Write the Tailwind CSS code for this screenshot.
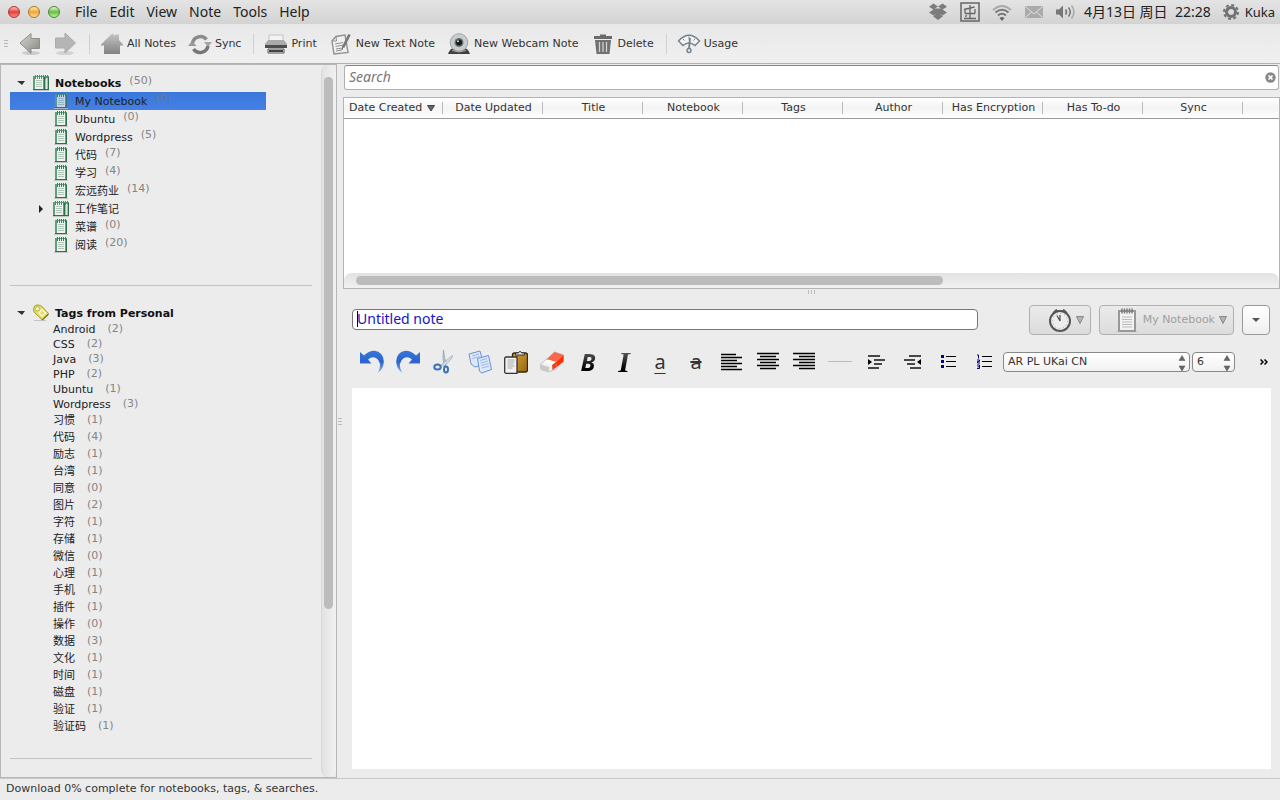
<!DOCTYPE html>
<html lang="en">
<head>
  <meta charset="UTF-8" />
  <meta name="viewport" content="width=device-width, initial-scale=1" />
  <title>Notes</title>
  <script src="https://cdn.jsdelivr.net/npm/@tailwindcss/browser@4"></script>
</head>
<body class="relative h-screen flex flex-col overflow-hidden bg-[#ececec] text-[#222] text-[11px] leading-4 font-['DejaVu_Sans','Noto_Sans_CJK_SC',sans-serif]">

  <!-- Shared shapes -->
  <svg class="absolute size-0">
    <defs>
      <linearGradient id="gray-down" x1="0" y1="0" x2="0" y2="1">
        <stop offset="0" stop-color="#c4c4c4" /><stop offset="1" stop-color="#828282" />
      </linearGradient>
      <linearGradient id="arrow-left" x1="0" y1="0" x2="1" y2="1">
        <stop offset="0" stop-color="#d6d8d4" /><stop offset="1" stop-color="#83857f" />
      </linearGradient>
      <linearGradient id="blue-arrow" x1="0" y1="0" x2="0" y2="1">
        <stop offset="0" stop-color="#3577d8" /><stop offset=".5" stop-color="#2c63cc" /><stop offset="1" stop-color="#8ab4ea" />
      </linearGradient>
      <linearGradient id="paste" x1="0" y1="0" x2="1" y2="1">
        <stop offset="0" stop-color="#d9a437" /><stop offset="1" stop-color="#94650c" />
      </linearGradient>
      <symbol id="notebook" viewBox="0 0 16 18">
        <path d="M1 16.500h14" stroke="#c4c4c4" />
        <rect x="2" y="2" width="12" height="14" fill="#5f9f7b" />
        <path d="M13.500 3v13M2 15.500h12" stroke="#2e7049" />
        <rect x="4" y="3" width="8" height="12" fill="#edf3ef" />
        <path d="M5 6.500h6M5 8.500h6M5 10.500h6M5 12.500h6" stroke="#b0c4b8" />
        <path d="M4.500 1v4M6.500 1v4M8.500 1v4M10.500 1v4M12.500 1v3" stroke="#666" />
      </symbol>
      <symbol id="notebooks" viewBox="0 0 16 18">
        <path d="M0 16.500h16" stroke="#c4c4c4" />
        <rect x="0" y="2" width="16" height="14" fill="#5f9f7b" />
        <path d="M15.500 3v13M0 15.500h16M11.500 3v13" stroke="#2e7049" />
        <rect x="2" y="3" width="8" height="12" fill="#edf3ef" />
        <path d="M13.500 4v11" stroke="#dbe9e1" stroke-width="2" />
        <path d="M3 6.500h6M3 8.500h6M3 10.500h6M3 12.500h6" stroke="#b0c4b8" />
        <path d="M2.500 1v4M4.500 1v4M6.500 1v4M8.500 1v4M10.500 1v4M12.500 1v4M14.500 1v3" stroke="#777" />
      </symbol>
    </defs>
  </svg>

  <!-- Menu bar -->
  <header class="h-6 shrink-0 flex items-center pl-2 pr-[5px] bg-linear-to-b from-[#e4e4e4] to-[#d3d3d3] text-sm font-['Noto_Sans','Noto_Sans_CJK_SC',sans-serif]">
    <div class="flex gap-2">
      <button aria-label="Close" class="size-3 rounded-full border border-[#a33] bg-linear-to-b from-[#fbb] via-[#e33f3f] to-[#f88]"></button>
      <button aria-label="Minimize" class="size-3 rounded-full border border-[#a87420] bg-linear-to-b from-[#fea] via-[#eda637] to-[#fd8]"></button>
      <button aria-label="Maximize" class="size-3 rounded-full border border-[#4b8332] bg-linear-to-b from-[#dfc] via-[#6fb94c] to-[#af8]"></button>
    </div>
    <nav class="flex gap-3 ml-[15px]">
      <button>File</button>
      <button>Edit</button>
      <button>View</button>
      <button>Note</button>
      <button>Tools</button>
      <button>Help</button>
    </nav>
    <div class="ml-auto flex items-center">
      <svg class="w-5 h-5 mr-3" viewBox="0 0 20 20" fill="#7c7c7c"><path d="M5.500 1.500L10 4.500 5.500 7.500 1 4.800zM14.500 1.500L19 4.800 14.500 7.500 10 4.500zM1 10.500L5.500 7.500 10 10.500 5.500 13.500zM19 10.500L14.500 7.500 10 10.500l4.500 3zM5 14.200L10 11l5 3.200-5 3.800z" /><path d="M5 6.500h10v6H5z" /></svg>
      <svg class="w-5 h-5 mr-3" viewBox="0 0 20 20" fill="none" stroke="#666" stroke-width="1.500"><rect x="1" y="1" width="18" height="18" /><path d="M4 16.500h12M10 3v13.500M5 11.500h10M5 7v4.500M15 7v4.500M14.500 5L4 7.500M6.500 13l-1 2" stroke-width="1.300" /></svg>
      <svg class="w-5 h-5 mr-3" viewBox="0 0 20 20" fill="none" stroke-width="2"><path d="M1 8q9-8 18 0" stroke="#aaa" /><path d="M3.500 10.500q6.500-5.500 13 0" stroke="#777" /><path d="M6 13.500q4-3.500 8 0" stroke="#777" /><path d="M10 19l-2.500-3q2.500-2 5 0z" fill="#666" stroke="none" /></svg>
      <svg class="w-5 h-5 mr-3" viewBox="0 0 20 20"><rect x="1" y="4" width="18" height="12" fill="#aaa" /><path d="M1.500 4.500L10 12l8.500-7.500M1.500 15.500L7.500 10M18.500 15.500L12.500 10" fill="none" stroke="#e2e2e2" /></svg>
      <svg class="w-5 h-5 mr-2" viewBox="0 0 20 20" fill="none" stroke="#777" stroke-width="1.600"><path d="M0 7.500h3l4-4v13l-4-4H0z" fill="#777" stroke="none" /><path d="M9.500 7.500q2 2.500 0 5M12.500 5.500q3.500 4.500 0 9" /><path d="M15.500 3.500q5 6.500 0 13" stroke="#aaa" /></svg>
      <span class="whitespace-pre">4月13日 周日  22:28</span>
      <svg class="w-4 h-4 ml-3 mr-1.5" viewBox="0 0 16 16" fill="none" stroke="#717171"><circle cx="8" cy="8" r="4.500" stroke-width="3" /><circle cx="8" cy="8" r="7" stroke-width="2" stroke-dasharray="3 2.500" /></svg>
      <span class="text-[13px]">Kuka</span>
    </div>
  </header>

  <!-- Toolbar -->
  <div class="h-10 shrink-0 flex items-center pl-1 border-b border-[#b2b2b2] bg-linear-to-b from-[#e8e8e8] to-[#f0f0f0] leading-[18px] text-[#333]">
    <span class="flex flex-col gap-0.5 w-1 mr-[11px]"><i class="h-px bg-[#b8b8b8]"></i><i class="h-px bg-[#b8b8b8]"></i><i class="h-px bg-[#b8b8b8]"></i></span>
    <button aria-label="Back" class="mr-2.5"><svg class="size-6" viewBox="0 0 24 24"><ellipse cx="12" cy="21" rx="9" ry="2" fill="#ccc" /><path d="M1 11L12 1.500v5h8.500v10H12v5z" fill="url(#arrow-left)" stroke="#8c8e89" /></svg></button>
    <button aria-label="Forward" class="mr-1.5"><svg class="size-6" viewBox="0 0 24 24"><ellipse cx="12" cy="21" rx="9" ry="2" fill="#d2d2d2" /><path d="M22.500 11L12 1v5H2.500v10H12v5z" fill="#b5b5b5" stroke="#aaa" /></svg></button>
    <span class="w-px h-5 ml-1.5 mr-1 bg-[#d0d0d0]"></span>
    <button class="flex items-center gap-[3px] px-1.5"><svg class="size-6" viewBox="0 0 24 24" fill="url(#gray-down)"><path d="M1 12.500L10 3.500 12.500 1.500 15 4V2.500h4V8l4 4.500v1H20V22H4v-8.500H1z" /></svg>All Notes</button>
    <button class="flex items-center gap-[3px] px-1.5"><svg class="size-6" viewBox="0 0 24 24" fill="none" stroke-width="3.500"><path d="M4.500 11a8 8 0 0 1 14-3.500" stroke="#8b8b8b" /><path d="M16 10h8l-4 5z" fill="#a5a5a5" /><path d="M20 14a8 8 0 0 1-14.500 3" stroke="#777" /><path d="M0 14h8.500L4 9z" fill="#999" /></svg>Sync</button>
    <span class="w-px h-5 ml-1.5 mr-1 bg-[#d0d0d0]"></span>
    <button class="flex items-center gap-[3px] px-1.5"><svg class="size-6" viewBox="0 0 24 24"><path d="M5 3h14v8H5z" fill="#f3f3f3" stroke="#c4c4c4" /><path d="M4 8h16l3 4v2H1v-2z" fill="#aaa" /><path d="M1 13h22v3H1z" fill="#4d4d4d" /><path d="M4 17h16v4H4z" fill="#eee" stroke="#555" /><path d="M5 19h14" stroke="#444" stroke-width="2" /></svg>Print</button>
    <button class="flex items-center gap-[3px] px-1.5"><svg class="size-6" viewBox="0 0 24 24" fill="none" stroke="#909090"><path d="M3 9l4-4.500 9-1.500 3 17.500L5 22z" fill="#f1f1f1" stroke-width="1.400" /><path d="M3 9h4.500L7 4.500" /><path d="M6 12l8-1.500M6.500 14.500l8-1.500M7 17l7-1M7 19l6-1" /><path d="M20.500 2.500l-6.500 13" stroke="#777" stroke-width="2.600" /><path d="M14 15l-1 3" stroke="#777" /></svg>New Text Note</button>
    <button class="flex items-center gap-[3px] px-1.5"><svg class="size-6" viewBox="0 0 24 24"><path d="M1 22q2-6 6-6h10q4 0 6 6z" fill="#404040" /><circle cx="12" cy="10.500" r="8.800" fill="#c9ccce" stroke="#a0a3a5" /><circle cx="12" cy="10.500" r="4.500" fill="#687070" /><circle cx="12" cy="10.500" r="3" fill="#161c1c" /><circle cx="11" cy="9.300" r="1" fill="#ddd" /><path d="M5 18.500q7 3 14 0" stroke="#aaa" fill="none" /></svg>New Webcam Note</button>
    <button class="flex items-center gap-[3px] px-1.5"><svg class="size-6" viewBox="0 0 24 24"><path d="M3 4h6V2.500h6V4h6v3H3z" fill="#6b6b6b" /><path d="M4 8h16l-1.500 14h-13z" fill="#707070" /><path d="M8.500 10v10M12 10v10M15.500 10v10" stroke="#d2d2d2" stroke-width="1.300" /></svg>Delete</button>
    <span class="w-px h-5 ml-1.5 mr-1 bg-[#d0d0d0]"></span>
    <button class="flex items-center gap-[3px] px-1.5"><svg class="size-6" viewBox="0 0 24 24" fill="none" stroke="#74808a" stroke-width="1.400"><path d="M1.500 9Q12-2.500 22.500 9l-4.500 4.500Q12 8.500 6 13.500z" fill="#f4f4f4" /><path d="M6 7l1.500 1.500M12 4.500v3M18 7l-1.500 1.500" stroke-width="1" /><path d="M13 6l-1 11" stroke-width="1.800" /><circle cx="12" cy="18.500" r="2" /></svg>Usage</button>
  </div>

  <main class="flex flex-1 min-h-0">
    <!-- Notebook and tag tree -->
    <aside class="w-[337px] shrink-0 flex border border-[#b6b6b6]">
      <div class="flex-1 pl-[9px] pr-[9px]">
        <section class="pt-[9px] pb-[31px] border-b border-[#c2c2c2]">
          <div class="flex h-[18px] leading-5">
            <button aria-label="Collapse notebooks" class="w-[23px] pl-[7px]"><svg class="w-2 h-1" viewBox="0 0 8 4"><path d="M0 0h8L5 4z" fill="#333" /></svg></button>
            <svg class="w-4 h-[18px] mr-1.5"><use href="#notebooks" /></svg>
            <h2 class="font-bold text-[#111]">Notebooks</h2><span class="ml-2 leading-[14px] text-[#858585]">(50)</span>
          </div>
          <ul class="leading-5">
            <li class="flex h-[18px] w-64 pl-[43px] bg-linear-to-b from-[#3b76da] to-[#4480e4]"><svg class="w-4 h-[18px] mr-1.5 opacity-75"><use href="#notebook" /></svg>My Notebook<span class="ml-2 leading-[14px] text-[#66789c]">(0)</span></li>
            <li class="flex h-[18px] pl-[43px]"><svg class="w-4 h-[18px] mr-1.5"><use href="#notebook" /></svg>Ubuntu<span class="ml-2 leading-[14px] text-[#858585]">(0)</span></li>
            <li class="flex h-[18px] pl-[43px]"><svg class="w-4 h-[18px] mr-1.5"><use href="#notebook" /></svg>Wordpress<span class="ml-2 leading-[14px] text-[#858585]">(5)</span></li>
            <li class="flex h-[18px] pl-[43px]"><svg class="w-4 h-[18px] mr-1.5"><use href="#notebook" /></svg>代码<span class="ml-2 leading-[14px] text-[#858585]">(7)</span></li>
            <li class="flex h-[18px] pl-[43px]"><svg class="w-4 h-[18px] mr-1.5"><use href="#notebook" /></svg>学习<span class="ml-2 leading-[14px] text-[#858585]">(4)</span></li>
            <li class="flex h-[18px] pl-[43px]"><svg class="w-4 h-[18px] mr-1.5"><use href="#notebook" /></svg>宏远药业<span class="ml-2 leading-[14px] text-[#858585]">(14)</span></li>
            <li class="flex h-[18px]"><button aria-label="Expand 工作笔记" class="w-[43px] pl-[29px]"><svg class="w-1 h-2" viewBox="0 0 4 8"><path d="M0 0v8l4-4z" fill="#222" /></svg></button><svg class="w-4 h-[18px] mr-1.5"><use href="#notebooks" /></svg>工作笔记</li>
            <li class="flex h-[18px] pl-[43px]"><svg class="w-4 h-[18px] mr-1.5"><use href="#notebook" /></svg>菜谱<span class="ml-2 leading-[14px] text-[#858585]">(0)</span></li>
            <li class="flex h-[18px] pl-[43px]"><svg class="w-4 h-[18px] mr-1.5"><use href="#notebook" /></svg>阅读<span class="ml-2 leading-[14px] text-[#858585]">(20)</span></li>
          </ul>
        </section>

        <section class="pt-[18px] pb-6 border-b border-[#c2c2c2]">
          <div class="flex h-[17px] leading-5">
            <button aria-label="Collapse tags" class="w-[23px] pl-[7px]"><svg class="w-2 h-1" viewBox="0 0 8 4"><path d="M0 0h8L5 4z" fill="#333" /></svg></button>
            <svg class="w-4 h-[17px] mr-1.5" viewBox="0 0 16 17"><path d="M1 16.500h12" stroke="#c4c4c4" /><path d="M.5 4.500Q1 1 4.500.8L8.500 2 15.500 9.500 9 15.800 1 8z" fill="#e2dc6a" stroke="#a89f2c" /><path d="M9 15.800l6.500-6.300v1.500L9.500 16.500z" fill="#6d6412" /><circle cx="4.500" cy="4.800" r="2" fill="#fbfbe0" stroke="#a89f2c" stroke-width=".7" /><path d="M6 9l3-3.500 3.500 3.500-3.500 3z" fill="none" stroke="#fbf9cf" stroke-width="1.300" /></svg>
            <h2 class="font-bold text-[#111]">Tags from Personal</h2>
          </div>
          <ul class="pl-[43px] leading-[17px]">
            <li class="flex h-[15px]">Android<span class="ml-3 leading-[15px] text-[#858585]">(2)</span></li>
            <li class="flex h-[15px]">CSS<span class="ml-3 leading-[15px] text-[#858585]">(2)</span></li>
            <li class="flex h-[15px]">Java<span class="ml-3 leading-[15px] text-[#858585]">(3)</span></li>
            <li class="flex h-[15px]">PHP<span class="ml-3 leading-[15px] text-[#858585]">(2)</span></li>
            <li class="flex h-[15px]">Ubuntu<span class="ml-3 leading-[15px] text-[#858585]">(1)</span></li>
            <li class="flex h-[15px]">Wordpress<span class="ml-3 leading-[15px] text-[#858585]">(3)</span></li>
          </ul>
          <ul class="pl-[43px] leading-5">
            <li class="flex h-[17px]">习惯<span class="ml-3 leading-[17px] text-[#858585]">(1)</span></li>
            <li class="flex h-[17px]">代码<span class="ml-3 leading-[17px] text-[#858585]">(4)</span></li>
            <li class="flex h-[17px]">励志<span class="ml-3 leading-[17px] text-[#858585]">(1)</span></li>
            <li class="flex h-[17px]">台湾<span class="ml-3 leading-[17px] text-[#858585]">(1)</span></li>
            <li class="flex h-[17px]">同意<span class="ml-3 leading-[17px] text-[#858585]">(0)</span></li>
            <li class="flex h-[17px]">图片<span class="ml-3 leading-[17px] text-[#858585]">(2)</span></li>
            <li class="flex h-[17px]">字符<span class="ml-3 leading-[17px] text-[#858585]">(1)</span></li>
            <li class="flex h-[17px]">存储<span class="ml-3 leading-[17px] text-[#858585]">(1)</span></li>
            <li class="flex h-[17px]">微信<span class="ml-3 leading-[17px] text-[#858585]">(0)</span></li>
            <li class="flex h-[17px]">心理<span class="ml-3 leading-[17px] text-[#858585]">(1)</span></li>
            <li class="flex h-[17px]">手机<span class="ml-3 leading-[17px] text-[#858585]">(1)</span></li>
            <li class="flex h-[17px]">插件<span class="ml-3 leading-[17px] text-[#858585]">(1)</span></li>
            <li class="flex h-[17px]">操作<span class="ml-3 leading-[17px] text-[#858585]">(0)</span></li>
            <li class="flex h-[17px]">数据<span class="ml-3 leading-[17px] text-[#858585]">(3)</span></li>
            <li class="flex h-[17px]">文化<span class="ml-3 leading-[17px] text-[#858585]">(1)</span></li>
            <li class="flex h-[17px]">时间<span class="ml-3 leading-[17px] text-[#858585]">(1)</span></li>
            <li class="flex h-[17px]">磁盘<span class="ml-3 leading-[17px] text-[#858585]">(1)</span></li>
            <li class="flex h-[17px]">验证<span class="ml-3 leading-[17px] text-[#858585]">(1)</span></li>
            <li class="flex h-[17px]">验证码<span class="ml-3 leading-[17px] text-[#858585]">(1)</span></li>
          </ul>
        </section>
      </div>
      <!-- Scrollbar -->
      <div class="w-[15px] pt-3 pl-0.5 rounded-lg border-l border-[#d8d8d8] bg-linear-to-r from-[#e2e2e2] to-[#f2f2f2]">
        <div class="w-[9px] h-[76%] rounded-full bg-[#bcbcbc]"></div>
      </div>
    </aside>

    <!-- Splitter -->
    <div class="w-1.5 shrink-0 flex flex-col justify-center items-center gap-0.5"><i class="w-1 h-px bg-[#bbb]"></i><i class="w-1 h-px bg-[#bbb]"></i><i class="w-1 h-px bg-[#bbb]"></i></div>

    <div class="flex-1 min-w-0 flex flex-col">
      <div class="relative ml-px mt-px mr-px">
        <input type="search" aria-label="Search" placeholder="Search" class="block w-full h-[25px] px-1 pb-0.5 rounded-[3px] border border-[#b0b0b0] border-t-[#888] bg-white text-sm italic placeholder:text-[#777] font-['Noto_Sans',sans-serif]" />
        <button aria-label="Clear search" class="absolute right-[3px] top-[7px]"><svg class="size-[11px]" viewBox="0 0 11 11"><circle cx="5.500" cy="5.500" r="5.200" fill="#888" /><path d="M3.500 3.500l4 4M7.500 3.500l-4 4" stroke="#fff" stroke-width="1.700" /></svg></button>
      </div>

      <!-- Note list -->
      <div class="h-48 shrink-0 mt-[7px] flex flex-col border border-[#b4b4b4] bg-white">
        <div class="flex-1 overflow-hidden">
          <table class="w-[1050px] table-fixed text-[#333]">
            <thead>
              <tr class="h-5 border-b border-[#999] bg-linear-to-b from-white via-[#f4f4f4] to-[#fdfdfd]">
                <th class="w-[99px] p-0 font-normal"><span class="flex items-center justify-between pl-[5px] pr-[7px] border-r border-[#bbb] leading-3">Date Created<svg class="w-2 h-1.5" viewBox="0 0 8 6"><path d="M.5.5h7L4 6z" fill="#666" stroke="#444" /></svg></span></th>
                <th class="w-[100px] p-0 font-normal"><span class="block pl-0.5 border-r border-[#bbb] leading-3">Date Updated</span></th>
                <th class="w-[100px] p-0 font-normal"><span class="block pl-0.5 border-r border-[#bbb] leading-3">Title</span></th>
                <th class="w-[100px] p-0 font-normal"><span class="block pl-0.5 border-r border-[#bbb] leading-3">Notebook</span></th>
                <th class="w-[100px] p-0 font-normal"><span class="block pl-0.5 border-r border-[#bbb] leading-3">Tags</span></th>
                <th class="w-[100px] p-0 font-normal"><span class="block pl-0.5 border-r border-[#bbb] leading-3">Author</span></th>
                <th class="w-[100px] p-0 font-normal"><span class="block pl-0.5 border-r border-[#bbb] leading-3">Has Encryption</span></th>
                <th class="w-[100px] p-0 font-normal"><span class="block pl-0.5 border-r border-[#bbb] leading-3">Has To-do</span></th>
                <th class="w-[100px] p-0 font-normal"><span class="block pl-0.5 border-r border-[#bbb] leading-3">Sync</span></th>
                <th class="p-0"></th>
              </tr>
            </thead>
          </table>
        </div>
        <div class="h-[15px] pt-[3px] pl-3 rounded-t-lg bg-linear-to-b from-[#e2e2e2] to-[#f1f1f1]">
          <div class="w-7/11 h-[9px] rounded-full bg-[#bcbcbc]"></div>
        </div>
      </div>
      <div class="h-1.5 flex justify-center items-center gap-0.5"><i class="w-px h-1 bg-[#bbb]"></i><i class="w-px h-1 bg-[#bbb]"></i><i class="w-px h-1 bg-[#bbb]"></i></div>

      <!-- Editor -->
      <div class="flex-1 min-h-0 flex flex-col pl-[9px] pr-[9px] pb-[9px]">
        <div class="flex items-start gap-2 mt-2.5 mr-px">
          <div class="relative w-[626px] mt-1">
            <input type="text" aria-label="Note title" value="Untitled note" class="block w-full h-[21px] px-1 pb-0.5 rounded border border-[#777] bg-white text-sm leading-4 text-[#1414c8] font-['Noto_Sans',sans-serif]" />
            <span class="absolute left-[5px] top-0.5 w-px h-4 bg-black"></span>
          </div>
          <button aria-label="Reminder" class="ml-auto w-[62px] h-[30px] flex items-center justify-end gap-1 pr-1.5 rounded border border-[#b0b0b0] bg-linear-to-b from-[#ebebeb] to-[#dcdcdc]">
            <svg class="size-6" viewBox="0 0 24 24" fill="none" stroke="#555"><path d="M5 4.500l3-3 2 1.500h4l2-1.500 3 3z" fill="#555" /><circle cx="12" cy="13" r="10" fill="#ededed" stroke-width="2" /><path d="M12 13V7M12 13l-3-5.500" stroke-width="1.300" /><circle cx="12" cy="13" r="7.500" stroke="#999" stroke-dasharray="1 2.930" /></svg>
            <svg class="w-2 h-2" viewBox="0 0 8 8"><path d="M.5.5h7L4 7.500z" fill="#b4b4b4" stroke="#888" /></svg>
          </button>
          <button class="w-[135px] h-[30px] flex items-center justify-end gap-1 pr-1.5 rounded border border-[#b0b0b0] bg-linear-to-b from-[#ebebeb] to-[#dcdcdc] text-[#a0a0a0]">
            <svg class="size-6" viewBox="0 0 24 24"><path d="M1 23.500h22" stroke="#ccc" /><rect x="4" y="3" width="16" height="20" fill="#f2f2f2" stroke="#999" stroke-width="2" /><path d="M7 9h10M7 11.500h10M7 14h10M7 16.500h10M7 19h10" stroke="#bbb" /><path d="M7 .5v5M9.500.5v5M12 .5v5M14.500.5v5M17 .5v5" stroke="#777" stroke-width="1.400" /></svg>
            <span class="whitespace-nowrap">My Notebook</span>
            <svg class="w-2 h-2" viewBox="0 0 8 8"><path d="M.5.5h7L4 7.500z" fill="#b4b4b4" stroke="#888" /></svg>
          </button>
          <button aria-label="More" class="w-7 h-[30px] flex items-center justify-center rounded border border-[#999] bg-linear-to-b from-white to-[#f0f0f0]"><svg class="w-2 h-1" viewBox="0 0 8 4"><path d="M0 0h8L4 4z" fill="#555" /></svg></button>
        </div>

        <div class="flex items-center h-6 mt-[15px] mb-3.5 pl-2 pr-px">
          <div class="flex gap-3 mr-[7px]">
            <button aria-label="Undo"><svg class="size-6" viewBox="0 0 24 24"><path d="M0 2v11.500h11.500L8 9.500q4-3.500 8-1.500 7 4 2 15 6-5 5.800-12Q23 2 14.500 .8 8.500 .8 4 5.500z" fill="url(#blue-arrow)" /></svg></button>
            <button aria-label="Redo"><svg class="size-6" viewBox="0 0 24 24"><path d="M24 2v11.500H12.500L16 9.500q-4-3.500-8-1.500-7 4-2 15Q0 18 .2 11 1 2 9.500 .8q6 0 10.500 4.700z" fill="url(#blue-arrow)" /></svg></button>
            <button aria-label="Cut"><svg class="size-6" viewBox="0 0 24 24" fill="none"><path d="M11.500 0L14 15.500l-2-1q-2-7-.5-14.500z" fill="#b9c6cf" stroke="#8799a5" stroke-width=".6" /><path d="M20.500 5.500q0 4-9.500 11l-1.500-2z" fill="#d5dde2" stroke="#8799a5" stroke-width=".6" /><ellipse cx="5.500" cy="17" rx="3.200" ry="2.600" stroke="#3872b8" stroke-width="2" /><ellipse cx="14" cy="19.500" rx="2" ry="3" stroke="#3872b8" stroke-width="2" /></svg></button>
            <button aria-label="Copy"><svg class="size-6" viewBox="0 0 24 24" fill="#dce8fb" stroke="#6b8fd8"><path d="M1 4l11-3 3.500 13.500L7 17 3 14z" /><path d="M4 6l7-2M4.500 8.500l7-2" stroke="#9db7e8" /><path d="M9.500 8.500l11-3 3 14-10 3.500-2-2z" /><path d="M12 10.500l7-2M12.500 13l7.500-2M13 15.500l7.500-2M14 18l7-2" stroke="#9db7e8" /></svg></button>
            <button aria-label="Paste"><svg class="size-6" viewBox="0 0 24 24"><rect x="8.500" y="3" width="15" height="19" rx="2" fill="url(#paste)" stroke="#33270a" stroke-width="1.300" /><path d="M11.500 5V3h3q1.500-3.500 3 0h3v2z" fill="#eee" stroke="#333" /><path d="M.7 8.500q0-1.500 1.500-1.500H13v16.300H2.200Q.7 23.300.7 21.500z" fill="#f1f1f1" stroke="#333" stroke-width="1.300" /><path d="M3.500 10h7M3.500 12h7M3.500 14h6M3.500 16h7M3.500 18h5" stroke="#aaa" /></svg></button>
            <button aria-label="Remove formatting"><svg class="size-6" viewBox="0 0 24 24"><path d="M3 21h12l8-8z" fill="#d8d8d8" /><path d="M.5 14.500L14.500 2 23.500 5v6.500L9.500 22 1 19.500z" fill="#f3f3f3" stroke="#aaa" stroke-width=".7" /><path d="M6.500 9.500L14.500 2l9 3-7.500 7z" fill="#f46a4a" /><path d="M16 12l7.500-7v6.500l-7 5.500z" fill="#ff2d05" /><path d="M8 9.500l8 2.500-4 3-8.500-3z" fill="#fafafa" /><path d="M12 15l4-3 .5 5-4 3z" fill="#f0401c" /><path d="M1 14.500l8.500 2.500-.5 5-8-2.500z" fill="#c9c9c9" /></svg></button>
            <button aria-label="Bold" class="size-6 font-[Noto_Sans,sans-serif] text-2xl/6 font-bold italic bg-linear-to-b from-[#666] to-black bg-clip-text text-transparent">B</button>
            <button aria-label="Italic" class="size-6 font-['Liberation_Serif',serif] text-3xl/6 font-bold italic bg-linear-to-b from-[#666] to-black bg-clip-text text-transparent">I</button>
            <button aria-label="Underline" class="size-6 font-['Noto_Sans',sans-serif] text-xl/5 underline underline-offset-4 decoration-1 text-[#333]">a</button>
            <button aria-label="Strikethrough" class="size-6 font-['Noto_Sans',sans-serif] text-xl/6 line-through text-[#333]">a</button>
            <button aria-label="Align left"><svg class="size-6" viewBox="0 0 24 24" stroke="#000" stroke-width="1.500"><path d="M1 4.500h15M1 7.500h21M1 10.500h16M1 13.500h21M1 16.500h16M1 19.500h21" /></svg></button>
            <button aria-label="Align center"><svg class="size-6" viewBox="0 0 24 24" stroke="#000" stroke-width="1.500"><path d="M1 3.500h22M4 6.500h16M1 9.500h22M4 12.500h16M1 15.500h22M4 18.500h16" /></svg></button>
            <button aria-label="Align right"><svg class="size-6" viewBox="0 0 24 24" stroke="#000" stroke-width="1.500"><path d="M1 3.500h22M7 6.500h16M1 9.500h22M7 12.500h16M1 15.500h22M7 18.500h16" /></svg></button>
            <button aria-label="Horizontal line"><svg class="size-6" viewBox="0 0 24 24"><path d="M0 11.500h24" stroke="#bbb" /></svg></button>
            <button aria-label="Indent"><svg class="size-6" viewBox="0 0 24 24" stroke="#111" stroke-width="1.700"><path d="M4 6h12M10 10h11M10 14h8M4 18h11" /><path d="M4 9v6l4-3z" stroke="none" /></svg></button>
            <button aria-label="Outdent"><svg class="size-6" viewBox="0 0 24 24" stroke="#111" stroke-width="1.700"><path d="M9 6h12M4 10h11M7 14h8M10 18h11" /><path d="M21 9v6l-4-3z" stroke="none" /></svg></button>
            <button aria-label="Bulleted list"><svg class="size-6" viewBox="0 0 24 24"><path d="M10 6.500h10M10 11.500h10M10 16.500h10" stroke="#000" /><path d="M5 5h3v3H5zM5 10h3v3H5zM5 15h3v3H5z" fill="#008" /></svg></button>
            <button aria-label="Numbered list"><svg class="size-6" viewBox="0 0 24 24"><path d="M10 6.500h10M10 11.500h10M10 16.500h10" stroke="#000" /><path d="M5 5h1.500v3.500M5 10h2.500v1.500H5.500V13H8M5 15h2.500v3.500H5M5.500 16.800h2" fill="none" stroke="#008" /></svg></button>
          </div>
          <div class="relative">
            <select aria-label="Font" class="block appearance-none w-[187px] h-5 pl-1 rounded border border-[#888] bg-linear-to-b from-white to-[#f2f2f2] text-[#333] leading-4"><option>AR PL UKai CN</option></select>
            <svg class="absolute right-1 top-0.5 w-2 h-[18px] pointer-events-none" viewBox="0 0 8 18"><path d="M1 6.500L4 1.500l3 5zM1 12h6l-3 5z" fill="#666" stroke="#555" stroke-width=".5" /></svg>
          </div>
          <div class="relative ml-0.5">
            <select aria-label="Font size" class="block appearance-none w-[43px] h-5 pl-1 rounded border border-[#888] bg-linear-to-b from-white to-[#f2f2f2] text-[#333] leading-4"><option>6</option></select>
            <svg class="absolute right-1 top-0.5 w-2 h-[18px] pointer-events-none" viewBox="0 0 8 18"><path d="M1 6.500L4 1.500l3 5zM1 12h6l-3 5z" fill="#666" stroke="#555" stroke-width=".5" /></svg>
          </div>
          <button aria-label="More tools" class="ml-auto mr-0.5"><svg class="w-2 h-1.5" viewBox="0 0 8 6" fill="none" stroke="#000" stroke-width="1.500"><path d="M.5.5L3 3 .5 5.500M4.500.5L7 3 4.500 5.500" /></svg></button>
        </div>

        <textarea aria-label="Note" class="flex-1 w-full resize-none bg-white"></textarea>
      </div>
    </div>
  </main>

  <!-- Status bar -->
  <footer class="h-[22px] shrink-0 pl-1.5 border-t border-[#c8c8c8] leading-[19px] text-[#333]">Download 0% complete for notebooks, tags, &amp; searches.</footer>

</body>
</html>
